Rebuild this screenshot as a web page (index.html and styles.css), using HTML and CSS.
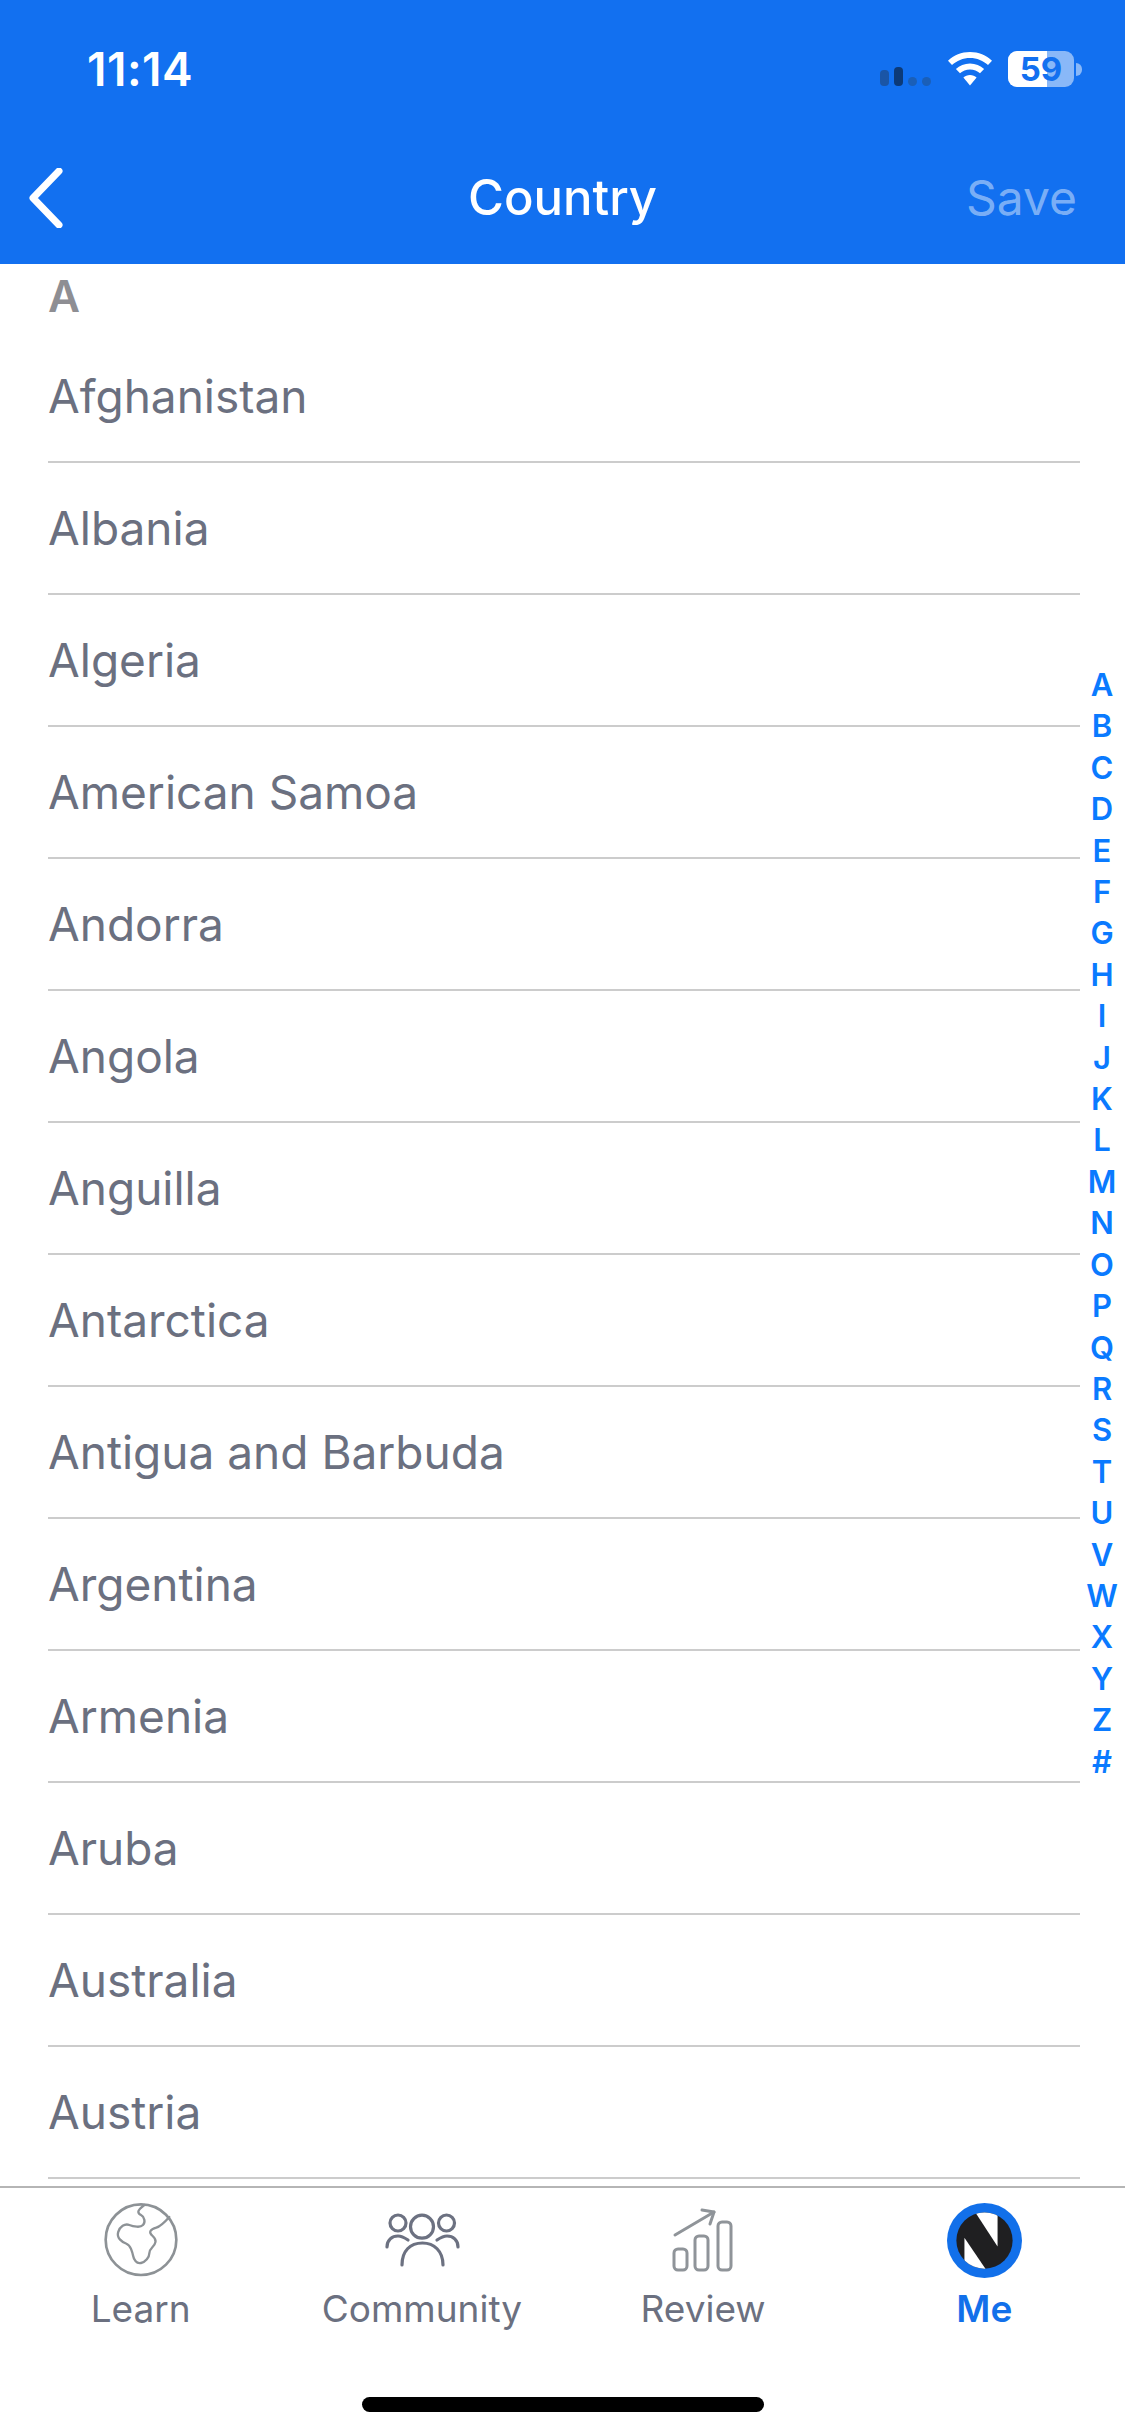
FILE: index.html
```html
<!DOCTYPE html>
<html lang="en">
<head>
<meta charset="utf-8">
<title>Country</title>
<link rel="stylesheet" href="styles.css">
</head>
<body>
<div class="app">
  <header class="header">
    <div class="status">
      <span class="time">11:14</span>
      <div class="status-icons">
        <svg class="signal" width="52" height="19" viewBox="0 0 52 19"><rect x="0" y="3" width="9" height="16" rx="4" fill="#1a55a6"/><rect x="14" y="0" width="9" height="19" rx="4" fill="#0c3a78"/><circle cx="32.5" cy="14.5" r="4.5" fill="#1a5fb8"/><circle cx="46.5" cy="14.5" r="4.5" fill="#1a5fb8"/></svg>
        <svg class="wifi" width="46" height="34" viewBox="0 0 46 34"><path d="M23 0C14.500 0 6.700 3.300 1 8.700L5 13C9.700 8.600 16 5.900 23 5.900S36.300 8.600 41 13L45 8.700C39.300 3.300 31.500 0 23 0Z" fill="#fff"/><path d="M23 11.500C17.500 11.500 12.600 13.600 8.900 17L13 21.300C15.600 18.900 19.100 17.400 23 17.400S30.400 18.900 33 21.300L37.100 17C33.400 13.600 28.500 11.500 23 11.500Z" fill="#fff"/><path d="M23 23C20.400 23 18.100 24 16.400 25.500L23 33.500L29.600 25.500C27.900 24 25.600 23 23 23Z" fill="#fff"/></svg>
        <div class="battery">
          <div class="battery-body"><div class="battery-fill"></div><span class="battery-text">59</span></div>
          <div class="battery-cap"></div>
        </div>
      </div>
    </div>
    <nav class="nav">
      <svg class="back" width="36" height="60" viewBox="0 0 36 60"><path d="M32 3L6 30L32 57" fill="none" stroke="#fff" stroke-width="7" stroke-linecap="round" stroke-linejoin="round"/></svg>
      <h1 class="title">Country</h1>
      <span class="save">Save</span>
    </nav>
  </header>

  <main class="list">
    <div class="section">A</div>
    <div class="row">Afghanistan</div>
    <div class="row">Albania</div>
    <div class="row">Algeria</div>
    <div class="row">American Samoa</div>
    <div class="row">Andorra</div>
    <div class="row">Angola</div>
    <div class="row">Anguilla</div>
    <div class="row">Antarctica</div>
    <div class="row">Antigua and Barbuda</div>
    <div class="row">Argentina</div>
    <div class="row">Armenia</div>
    <div class="row">Aruba</div>
    <div class="row">Australia</div>
    <div class="row">Austria</div>
    <div class="index">
      <span>A</span><span>B</span><span>C</span><span>D</span><span>E</span><span>F</span><span>G</span><span>H</span><span>I</span><span>J</span><span>K</span><span>L</span><span>M</span><span>N</span><span>O</span><span>P</span><span>Q</span><span>R</span><span>S</span><span>T</span><span>U</span><span>V</span><span>W</span><span>X</span><span>Y</span><span>Z</span><span>#</span>
    </div>
  </main>

  <footer class="tabbar">
    <div class="tabs">
      <div class="tab">
        <div class="tab-icon">
          <svg width="74" height="74" viewBox="69 40 222 222"><circle cx="180" cy="150" r="106" fill="none" stroke="#8d9296" stroke-width="8"/><path d="M190 46Q172 60 172 66Q172 72 180 76Q188 80 190 90Q192 100 186 106Q180 112 167.500 111Q155 110 145 106Q135 102 125 108.500Q115 115 111.500 127.500Q108 140 116.500 149Q125 158 135 161.500Q145 165 150 177.500Q155 190 156.500 199Q158 208 164 215Q170 222 180 220Q190 218 197.500 209Q205 200 205 191Q205 182 213.500 173.500Q222 165 223.500 156.500Q225 148 215 139Q205 130 208.500 124Q212 118 226 114Q240 110 265 82" fill="none" stroke="#8d9296" stroke-width="7" stroke-linecap="round"/></svg>
        </div>
        <span class="tab-label">Learn</span>
      </div>
      <div class="tab">
        <div class="tab-icon">
          <svg width="76" height="58" viewBox="0 0 76 58" fill="none" stroke="#6c7181" stroke-width="3.200" stroke-linecap="round"><circle cx="38" cy="15.700" r="11.500"/><circle cx="14" cy="12" r="8"/><circle cx="62.500" cy="12" r="8"/><path d="M18 54C18 40 26 32 38.500 32C50 32 59 40 59 54"/><path d="M3 36C3 29 8 25 14 25C18 25 21 27 24 29"/><path d="M74 36C74 29 69 25 63 25C59 25 56 27 53 29"/></svg>
        </div>
        <span class="tab-label">Community</span>
      </div>
      <div class="tab">
        <div class="tab-icon">
          <svg width="68" height="68" viewBox="0 0 68 68" fill="none" stroke="#8f9499" stroke-width="3" stroke-linecap="round" stroke-linejoin="round"><rect x="5" y="43" width="13" height="21" rx="4"/><rect x="26" y="30" width="13" height="34" rx="4"/><rect x="49" y="16" width="13" height="48" rx="4"/><path d="M6 29L45 6"/><path d="M33 4L45 6L41 18"/></svg>
        </div>
        <span class="tab-label">Review</span>
      </div>
      <div class="tab tab-active">
        <div class="tab-icon">
          <svg width="75" height="75" viewBox="78 66 224 224"><defs><clipPath id="inner"><circle cx="190" cy="178" r="84"/></clipPath></defs><circle cx="190" cy="178" r="112" fill="#1270ea"/><g clip-path="url(#inner)"><rect x="100" y="90" width="180" height="180" fill="#1f1f21"/><path d="M160 90L229 90L229 196Z" fill="#fff"/><path d="M130 170L130 270L198 270Z" fill="#fff"/></g></svg>
        </div>
        <span class="tab-label">Me</span>
      </div>
    </div>
    <div class="home-indicator"></div>
  </footer>
</div>
</body>
</html>
```
FILE: styles.css
```css
* { box-sizing: border-box; }
html, body { margin: 0; padding: 0; }
body { width: 1125px; height: 2436px; background: #fff; font-family: Inter, "Liberation Sans", sans-serif; overflow: hidden; }
.app { width: 1125px; height: 2436px; display: flex; flex-direction: column; position: relative; }

.header { height: 264px; background: #1270f0; color: #fff; display: flex; flex-direction: column; flex: none; }
.status { height: 132px; display: flex; justify-content: space-between; align-items: flex-start; padding: 42px 43px 0 87px; }
.time { font-size: 46px; line-height: 54px; font-weight: 600; letter-spacing: 0.5px; }
.status-icons { display: flex; align-items: flex-start; padding-top: 9px; }
.signal { margin: 16px 15px 0 0; }
.wifi { margin: 1px 15px 0 0; }
.battery { display: flex; align-items: center; }
.battery-body { width: 66px; height: 36px; border-radius: 9px; background: rgba(255,255,255,.5); position: relative; display: flex; align-items: center; justify-content: center; }
.battery-fill { position: absolute; left: 0; top: 0; bottom: 0; width: 39px; background: #fff; border-radius: 9px 0 0 9px; }
.battery-text { position: relative; font-size: 33px; font-weight: 700; line-height: 36px; color: #1270f0; }
.battery-cap { width: 6px; height: 13px; margin-left: 2px; border-radius: 0 6px 6px 0; background: rgba(255,255,255,.5); }

.nav { height: 132px; display: flex; align-items: center; justify-content: space-between; position: relative; padding: 0 48px 0 27px; }
.back { display: block; }
.title { position: absolute; left: 0; right: 0; top: 38px; margin: 0; text-align: center; font-size: 49px; line-height: 56px; font-weight: 500; }
.save { font-size: 48px; line-height: 56px; font-weight: 400; color: rgba(255,255,255,.45); margin-top: -1px; }

.list { flex: 1; position: relative; overflow: hidden; }
.section { height: 67px; padding: 6px 0 0 48px; font-size: 44px; line-height: 52px; font-weight: 600; color: #8e8e93; }
.row { height: 132px; margin: 0 45px 0 48px; display: flex; align-items: center; border-bottom: 2px solid #ccc; font-size: 46px; color: #6b7080; }
.index { position: absolute; right: 2px; top: 400px; width: 42px; display: flex; flex-direction: column; align-items: center; font-size: 31px; line-height: 41.4px; font-weight: 600; color: #0a7aff; }

.tabbar { height: 250px; flex: none; border-top: 2px solid #b5b5b5; display: flex; flex-direction: column; padding-top: 13px; }
.tabs { display: grid; grid-template-columns: repeat(4, 1fr); }
.tab { display: flex; flex-direction: column; align-items: center; }
.tab-icon { height: 78px; display: flex; align-items: center; justify-content: center; }
.tab-label { margin-top: 8px; font-size: 37px; line-height: 44px; color: #6b7080; }
.tab-active .tab-label { color: #1270ea; font-weight: 600; }
.home-indicator { width: 402px; height: 15px; border-radius: 8px; background: #000; margin: auto auto 24px; }
```
